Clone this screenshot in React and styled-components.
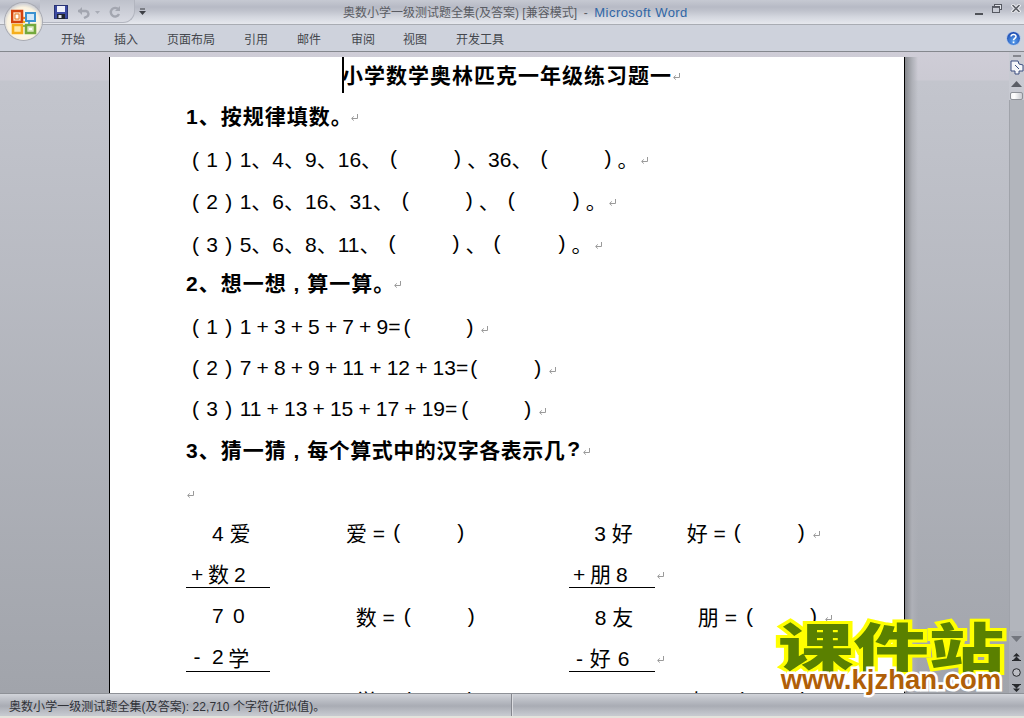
import React from 'react';
import styled, { createGlobalStyle } from 'styled-components';

const Global = createGlobalStyle`
  html, body { margin: 0; padding: 0; background: #c4c7cf; }
`;

const Window = styled.div`
  position: relative;
  width: 1024px;
  height: 718px;
  overflow: hidden;
  display: flex;
  flex-direction: column;
  font-family: "Liberation Sans", "Noto Sans CJK SC", sans-serif;
`;

const TitleBar = styled.div`
  height: 24px;
  flex: none;
  display: flex;
  align-items: flex-start;
  border-bottom: 1px solid #a9acb3;
  background: linear-gradient(#c6c9d2 0, #b7bac5 7px, #c0c3cd 11px, #d4d7df 17px, #e6e8ee 24px);
  position: relative;
`;

const QuickAccess = styled.div`
  margin-left: 40px;
  width: 95px;
  height: 23px;
  display: flex;
  align-items: center;
  border: 1px solid #b2b5bf;
  border-top: none;
  border-left: none;
  border-radius: 0 0 12px 0;
  background: linear-gradient(#bec1cb, #d9dbe3);
  padding: 2px 0 0 14px;
  box-sizing: border-box;
`;

const QuickSlot = styled.span`
  display: flex;
  margin-left: ${(p) => p.$ml || 0}px;
`;

const Customize = styled.span`
  display: flex;
  margin: 8px 0 0 4px;
`;

const Caption = styled.div`
  position: absolute;
  left: 343px;
  top: 5px;
  font-size: 12px;
  line-height: 16px;
  color: #5a5c63;
  white-space: pre;
`;

const Product = styled.span`
  color: #2f66a6;
  font-size: 13px;
  letter-spacing: 0.45px;
`;

const WindowButtons = styled.div`
  margin-left: auto;
  display: flex;
  align-items: flex-start;
  gap: 9px;
  padding: 4px 3px 0 0;
`;

const Ribbon = styled.div`
  height: 26px;
  flex: none;
  display: flex;
  align-items: center;
  background: #ced2dc;
  border-bottom: 1px solid #85888e;
  padding-right: 3px;
`;

const Tab = styled.span`
  margin-left: ${(p) => p.$ml}px;
  font-size: 12px;
  color: #44474d;
`;

const HelpIcon = styled.span`
  margin-left: auto;
  display: flex;
`;

const Workspace = styled.div`
  flex: 1;
  min-height: 0;
  display: flex;
  background: linear-gradient(#cfcdd7 0, #cbcad3 28px, #c3c5cd 29px, #a1a4ab 100%);
`;

const Margin = styled.div`
  width: ${(p) => p.$w}px;
  flex: none;
  margin-top: 5px;
  background: ${(p) => p.$shadow ? 'linear-gradient(90deg, #85878c 0, #aeb0b7 7px, transparent 13px)' : 'none'};
`;

const Page = styled.div`
  width: 794px;
  flex: none;
  margin-top: 5px;
  background: #fff;
  border-left: 1px solid #000;
  border-right: 1px solid #000;
  overflow: hidden;
  color: #000;
  font-size: 21px;
`;

const Line = styled.div`
  position: relative;
  height: ${(p) => p.$h || 40}px;
  margin-top: ${(p) => p.$mt || 0}px;
  padding-left: ${(p) => p.$left}px;
  display: flex;
  align-items: center;
  white-space: pre;
  font-weight: ${(p) => p.$bold ? 700 : 400};
  letter-spacing: ${(p) => p.$spacing || 0}px;
`;

const Caret = styled.span`
  position: absolute;
  left: 232px;
  top: 0;
  width: 2px;
  height: 36px;
  background: #000;
`;

const Piece = styled.span`
  margin-left: ${(p) => p.$ml || 0}px;
  word-spacing: ${(p) => p.$ws || 0}px;
  letter-spacing: ${(p) => p.$ls === undefined ? 'inherit' : `${p.$ls}px`};
`;

const Sum = styled.span`
  display: flex;
  align-items: center;
  box-sizing: border-box;
  height: 30px;
  width: ${(p) => p.$w}px;
  margin-left: ${(p) => p.$ml || 0}px;
  padding-left: ${(p) => p.$pad || 0}px;
  border-bottom: 1px solid #000;
`;

const ReturnMark = styled.svg`
  margin-left: ${(p) => p.$ml ?? 7}px;
  margin-top: 5px;
  flex: none;
`;

const ScrollBar = styled.div`
  width: 15px;
  flex: none;
  display: flex;
  flex-direction: column;
  align-items: center;
  background: linear-gradient(#c9cbd3, #a9acb4);
`;

const Grip = styled.span`
  width: 8px;
  height: 2px;
  margin-top: 3px;
  background: #85878e;
`;

const RulerToggle = styled.span`
  display: flex;
  margin-top: 3px;
`;

const ArrowButton = styled.span`
  display: flex;
  justify-content: center;
  align-items: center;
  height: ${(p) => p.$h}px;
  width: 100%;
  box-sizing: border-box;
`;

const Thumb = styled.span`
  width: 13px;
  height: 8px;
  border: 1px solid #8e9198;
  border-radius: 2px;
  box-sizing: border-box;
  background: linear-gradient(90deg, #f5f5f7, #fff 30%, #c8cad0);
`;

const Track = styled.span`
  flex: 1;
  width: 100%;
  background: #b2b5bc;
  border-left: 1px solid #a0a3aa;
  box-sizing: border-box;
`;

const PageNav = styled.span`
  display: flex;
  flex-direction: column;
  align-items: center;
  gap: 7px;
  height: 46px;
  padding-top: 6px;
  box-sizing: border-box;
`;

const StatusBar = styled.div`
  height: 25px;
  flex: none;
  display: flex;
  align-items: center;
  box-sizing: border-box;
  border-top: 1px solid #8e9197;
  border-bottom: 2px solid #e4e4dc;
  background: linear-gradient(#d2d4da 0, #bfc2c9 5px, #a9acb4 12px, #c6c9cf 21px);
  font-size: 12px;
  letter-spacing: 0.05px;
  color: #303238;
  padding-left: 9px;
  position: relative;
`;

const StatusDivider = styled.span`
  position: absolute;
  left: 511px;
  top: 0;
  bottom: 0;
  width: 1px;
  background: #85878e;
  border-right: 1px solid #dcdde1;
`;

const Watermark = styled.div`
  position: absolute;
  left: 775px;
  top: 607px;
  width: 232px;
  text-align: center;
`;

const BigBrand = styled.div`
  font-family: "Noto Sans CJK SC", sans-serif;
  font-weight: 900;
  font-size: 52px;
  line-height: 76px;
  transform: scaleX(1.45);
  color: #5a8000;
  -webkit-text-stroke: 6px #ffff00;
  paint-order: stroke fill;
  white-space: nowrap;
`;

const SmallBrand = styled.div`
  position: relative;
  margin-top: -17px;
  font-family: "Liberation Sans", sans-serif;
  font-weight: 700;
  font-size: 27.5px;
  line-height: 28px;
  color: #b05f08;
  -webkit-text-stroke: 5px #fff;
  paint-order: stroke fill;
  white-space: nowrap;
`;

const Orb = styled.div`
  position: absolute;
  left: 5px;
  top: 3px;
  width: 37px;
  height: 37px;
  border-radius: 50%;
  display: flex;
  align-items: center;
  justify-content: center;
  background: radial-gradient(circle at 50% 55%, #fff 0, #fbf3df 58%, #cfd0d5 72%, #8e9094 100%);
  box-shadow: 0 0 0 1px #a9abb2;
`;

const Return = ({ ml }) => (
  <ReturnMark $ml={ml} width="9" height="9" viewBox="0 0 9 9">
    <path d="M7.5 1v4.5H2M3.8 3.4 1.6 5.5l2.2 2.1" fill="none" stroke="#9a9a9a" strokeWidth="1" />
  </ReturnMark>
);

const OfficeLogo = () => (
  <svg width="26" height="26" viewBox="0 0 26 26">
    <path d="M1 2h10v11H1z" fill="#fbd9b8" stroke="#d3420e" strokeWidth="2.6" />
    <path d="M4 5h4v5H4z" fill="#fff" stroke="#e77a24" />
    <path d="M15 4h9v8h-9z" fill="#d2e8f8" stroke="#3b92d0" strokeWidth="2" />
    <path d="M2 16h9v8H2z" fill="#ffe9a8" stroke="#f5ae1c" strokeWidth="2.6" />
    <path d="M15 16h9v8h-9z" fill="#dbe9c0" stroke="#74a93c" strokeWidth="2.6" />
    <path d="M18 19h3v2h-3z" fill="#fff" />
    <circle cx="13" cy="9" r="1.2" fill="#e77a24" />
    <circle cx="13" cy="13" r="1.3" fill="#f5ae1c" />
    <circle cx="18" cy="14" r="1.1" fill="#3b92d0" />
    <circle cx="13" cy="17" r="1.1" fill="#74a93c" />
  </svg>
);

const SaveIcon = () => (
  <svg width="14" height="14" viewBox="0 0 14 14">
    <rect width="14" height="14" fill="#3c4aa2" />
    <rect x="0.5" y="0.5" width="13" height="13" fill="none" stroke="#283272" />
    <rect x="3" y="1" width="8" height="6" fill="#eef0fa" />
    <rect x="3" y="9" width="8" height="5" fill="#20242e" />
    <rect x="4.5" y="10" width="3" height="3" fill="#dfe1ea" />
  </svg>
);

const UndoIcon = () => (
  <svg width="13" height="13" viewBox="0 0 13 13">
    <path d="M1 5h8a3 3 0 0 1 1 5.5L7 12" fill="none" stroke="#a3a6b0" strokeWidth="2.4" />
    <path d="M5 1v8L1 5z" fill="#a3a6b0" />
  </svg>
);

const RedoIcon = () => (
  <svg width="12" height="13" viewBox="0 0 12 13">
    <path d="M9.5 3.5A4.3 4.3 0 1 0 10 8" fill="none" stroke="#a3a6b0" strokeWidth="2.4" />
    <path d="M11 0v5H6z" fill="#a3a6b0" />
  </svg>
);

const SmallDrop = () => (
  <svg width="5" height="3" viewBox="0 0 5 3"><path d="M0 0h5L2.5 3z" fill="#a9acb6" /></svg>
);

const CustomizeIcon = () => (
  <svg width="7" height="7" viewBox="0 0 7 7">
    <path d="M1 1h5" stroke="#3d3f45" strokeWidth="1" />
    <path d="M0 3h7L3.5 7z" fill="#3d3f45" />
  </svg>
);

const MinIcon = () => (
  <svg width="8" height="12" viewBox="0 0 8 12"><rect y="9" width="8" height="2" fill="#4f5258" /></svg>
);

const RestoreIcon = () => (
  <svg width="10" height="9" viewBox="0 0 10 9">
    <rect x="2.5" y="0.5" width="7" height="5" fill="#e3e5ea" stroke="#565962" />
    <rect x="0.5" y="2.5" width="7" height="6" fill="#c9ccd5" stroke="#565962" />
    <rect x="0.5" y="2.5" width="7" height="1.4" fill="#565962" />
  </svg>
);

const CloseIcon = () => (
  <svg width="10" height="9" viewBox="0 0 10 9">
    <path d="M1 0.5 9 8.5M9 0.5 1 8.5" stroke="#f2f3f6" strokeWidth="3.4" />
    <path d="M1.5 1 8.5 8M8.5 1 1.5 8" stroke="#5e6168" strokeWidth="1.6" />
  </svg>
);

const HelpGlyph = () => (
  <svg width="15" height="15" viewBox="0 0 15 15">
    <defs>
      <radialGradient id="help" cx="50%" cy="70%" r="65%">
        <stop offset="0" stopColor="#5aa2f0" />
        <stop offset="1" stopColor="#1c49b0" />
      </radialGradient>
    </defs>
    <circle cx="7.5" cy="7.5" r="7" fill="url(#help)" stroke="#c7d4ea" />
    <path d="M5 5.5c.4-3 5.2-2.6 5 .1-.1 1.7-2.5 1.9-2.5 3.6" fill="none" stroke="#fff" strokeWidth="1.5" />
    <rect x="6.7" y="10.5" width="1.7" height="1.7" fill="#fff" />
  </svg>
);

const RulerIcon = () => (
  <svg width="14" height="15" viewBox="0 0 14 15">
    <path d="M1 1h7l1 3 4 1v6H9v3H5v-3H1z" fill="#f4f5f8" stroke="#3c4e80" />
    <path d="M5 5l4 4" stroke="#3c4e80" />
  </svg>
);

const UpIcon = () => (
  <svg width="11" height="6" viewBox="0 0 11 6"><path d="M5.5 0 11 6H0z" fill="#5b5e66" /></svg>
);

const DownIcon = () => (
  <svg width="11" height="6" viewBox="0 0 11 6"><path d="M0 0h11L5.5 6z" fill="#73767e" /></svg>
);

const PrevIcon = () => (
  <svg width="9" height="8" viewBox="0 0 9 8">
    <path d="M4.5 0 8 3.5H1zM4.5 3.5 8 7H1z" fill="#26282c" />
    <rect y="7" width="9" height="1" fill="#26282c" />
  </svg>
);

const NextIcon = () => (
  <svg width="9" height="8" viewBox="0 0 9 8">
    <rect width="9" height="1" fill="#26282c" />
    <path d="M1 1h7L4.5 4.5zM1 4.5h7L4.5 8z" fill="#26282c" />
  </svg>
);

const BrowseDot = () => (
  <svg width="9" height="9" viewBox="0 0 9 9"><circle cx="4.5" cy="4.5" r="3.8" fill="#bcbec4" stroke="#26282c" /></svg>
);

const tabs = [
  ['开始', 61], ['插入', 29], ['页面布局', 29], ['引用', 29],
  ['邮件', 29], ['审阅', 30], ['视图', 28], ['开发工具', 29],
];

const TEXT_LEFT = 82;
const HEAD_LEFT = 76;
const EXPR_WS = -0.7;

const App = () => (
  <Window>
    <Global />
    <TitleBar>
      <QuickAccess>
        <QuickSlot><SaveIcon /></QuickSlot>
        <QuickSlot $ml={9}><UndoIcon /></QuickSlot>
        <QuickSlot $ml={5}><SmallDrop /></QuickSlot>
        <QuickSlot $ml={9}><RedoIcon /></QuickSlot>
      </QuickAccess>
      <Customize><CustomizeIcon /></Customize>
      <Caption>奥数小学一级测试题全集(及答案) [兼容模式]  -  <Product>Microsoft Word</Product></Caption>
      <WindowButtons>
        <MinIcon />
        <RestoreIcon />
        <CloseIcon />
      </WindowButtons>
    </TitleBar>
    <Ribbon>
      {tabs.map(([label, ml]) => <Tab key={label} $ml={ml}>{label}</Tab>)}
      <HelpIcon><HelpGlyph /></HelpIcon>
    </Ribbon>
    <Workspace>
      <Margin $w={109} />
      <Page>
        <Line $h={34} $left={232} $bold $spacing={1}>
          <Caret />
          小学数学奥林匹克一年级练习题一<Return ml={0} />
        </Line>
        <Line $mt={4} $left={HEAD_LEFT} $bold $spacing={1}>1、按规律填数。<Return ml={-3} /></Line>

        <Line $mt={3} $left={TEXT_LEFT}>
          <Piece $ws={1.5}>( 1 ) 1、4、9、16、</Piece><Piece $ml={8}>(</Piece><Piece $ml={57}>)</Piece>
          <Piece $ml={6}>、36、</Piece><Piece $ml={8}>(</Piece><Piece $ml={57}>)</Piece><Piece $ml={6}>。</Piece><Return ml={2} />
        </Line>
        <Line $mt={2} $left={TEXT_LEFT}>
          <Piece $ws={1.5}>( 2 ) 1、6、16、31、</Piece><Piece $ml={8}>(</Piece><Piece $ml={57}>)</Piece>
          <Piece $ml={6}>、</Piece><Piece $ml={8}>(</Piece><Piece $ml={58}>)</Piece><Piece $ml={6}>。</Piece><Return ml={1} />
        </Line>
        <Line $mt={3} $left={TEXT_LEFT}>
          <Piece $ws={1.5}>( 3 ) 5、6、8、11、</Piece><Piece $ml={8}>(</Piece><Piece $ml={57}>)</Piece>
          <Piece $ml={6}>、</Piece><Piece $ml={7}>(</Piece><Piece $ml={58}>)</Piece><Piece $ml={6}>。</Piece><Return ml={1} />
        </Line>

        <Line $mt={-1} $left={HEAD_LEFT} $bold $spacing={1}>2、想一想 , 算一算。<Return ml={-2} /></Line>

        <Line $mt={5} $left={TEXT_LEFT}>
          <Piece $ws={1.5}>( 1 ) </Piece><Piece $ws={EXPR_WS}>1 + 3 + 5 + 7 + 9=</Piece><Piece $ml={3}>(</Piece><Piece $ml={56}>)</Piece><Return />
        </Line>
        <Line $mt={1} $left={TEXT_LEFT}>
          <Piece $ws={1.5}>( 2 ) </Piece><Piece $ws={EXPR_WS}>7 + 8 + 9 + 11 + 12 + 13=</Piece><Piece $ml={2}>(</Piece><Piece $ml={57}>)</Piece><Return />
        </Line>
        <Line $mt={1} $left={TEXT_LEFT}>
          <Piece $ws={1.5}>( 3 ) </Piece><Piece $ws={EXPR_WS}>11 + 13 + 15 + 17 + 19=</Piece><Piece $ml={4}>(</Piece><Piece $ml={56}>)</Piece><Return />
        </Line>

        <Line $left={HEAD_LEFT} $bold $spacing={1}>
          3、猜一猜 , <Piece $ls={0.5}>每个算式中的汉字各表示几</Piece><Piece $ml={2}>?</Piece><Return ml={1} />
        </Line>
        <Line $mt={3} $left={HEAD_LEFT}><Return ml={0} /></Line>

        <Line $left={102}>
          <Piece>4 爱</Piece><Piece $ml={95.5}>爱 =</Piece><Piece $ml={8}>(</Piece><Piece $ml={57}>)</Piece>
          <Piece $ml={130}>3 好</Piece><Piece $ml={54}>好 =</Piece><Piece $ml={8}>(</Piece><Piece $ml={57}>)</Piece><Return />
        </Line>
        <Line $mt={1} $left={HEAD_LEFT}>
          <Sum $w={84} $pad={5}><Piece $ws={-1}>+ 数 2</Piece></Sum>
          <Sum $w={86} $ml={299} $pad={4}><Piece $ws={-1}>+ 朋 8</Piece></Sum><Return ml={1} />
        </Line>
        <Line $mt={3} $left={102}>
          <Piece $ws={3.5}>7 0</Piece><Piece $ml={111}>数 =</Piece><Piece $ml={9}>(</Piece><Piece $ml={57}>)</Piece>
          <Piece $ml={120}>8 友</Piece><Piece $ml={64.5}>朋 =</Piece><Piece $ml={9}>(</Piece><Piece $ml={57}>)</Piece><Return />
        </Line>
        <Line $mt={1} $left={HEAD_LEFT}>
          <Sum $w={84} $pad={7.5}><Piece $ws={5.7}>- 2</Piece><Piece $ml={4.5}>学</Piece></Sum>
          <Sum $w={86} $ml={299} $pad={7}><Piece $ws={1}>- 好 6</Piece></Sum><Return ml={1} />
        </Line>
        <Line $mt={3} $left={102}>
          <Piece $ws={3.5}>4 7</Piece><Piece $ml={111}>学 =</Piece><Piece $ml={9}>(</Piece><Piece $ml={57}>)</Piece>
          <Piece $ml={120}>5 7</Piece><Piece $ml={64.5}>友 =</Piece><Piece $ml={9}>(</Piece><Piece $ml={57}>)</Piece>
        </Line>
      </Page>
      <Margin $w={104} $shadow />
      <ScrollBar>
        <Grip />
        <RulerToggle><RulerIcon /></RulerToggle>
        <ArrowButton $h={17}><UpIcon /></ArrowButton>
        <Thumb />
        <Track />
        <ArrowButton $h={16}><DownIcon /></ArrowButton>
        <PageNav>
          <PrevIcon />
          <BrowseDot />
          <NextIcon />
        </PageNav>
      </ScrollBar>
    </Workspace>
    <StatusBar>
      奥数小学一级测试题全集(及答案): 22,710 个字符(近似值)。
      <StatusDivider />
    </StatusBar>
    <Orb><OfficeLogo /></Orb>
    <Watermark>
      <BigBrand>课件站</BigBrand>
      <SmallBrand>www.kjzhan.com</SmallBrand>
    </Watermark>
  </Window>
);

export default App;
